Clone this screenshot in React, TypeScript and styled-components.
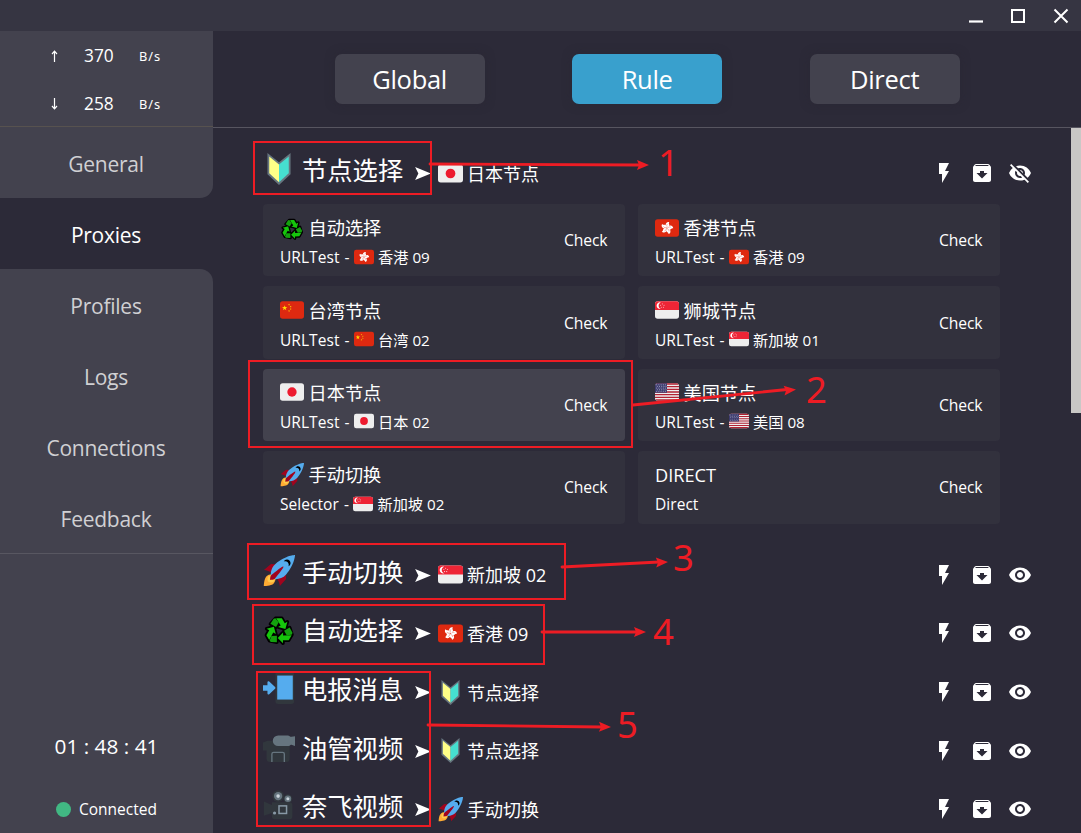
import React from 'react';
import styled, { createGlobalStyle } from 'styled-components';
import { MdFlashOn, MdArchive, MdVisibility, MdVisibilityOff } from 'react-icons/md';

const Global = createGlobalStyle`
  * { box-sizing: border-box; }
  html, body { margin: 0; padding: 0; background: #2c2a38; overflow: hidden; }
  body { font-family: "Open Sans", "Noto Sans CJK SC", sans-serif; color: #fff; }
`;

const Window = styled.div`
  width: 1081px; height: 833px; overflow: hidden; position: relative;
  display: flex; flex-direction: column; background: #2c2a38;
`;
const TitleBar = styled.header`
  flex: none; height: 31px; background: #363542;
  display: flex; justify-content: flex-end; align-items: center; gap: 26.5px; padding-right: 12.5px;
  svg { width: 16px; height: 16px; display: block; }
`;
const Body = styled.div`flex: 1; display: flex; min-height: 0;`;
const Sidebar = styled.aside`
  flex: none; width: 213px; display: flex; flex-direction: column; background: #2c2a38;
`;
const Stats = styled.div`
  height: 96px; background: #43424e; border-bottom: 1px solid #57524f;
`;
const StatRow = styled.div`
  height: 48px; display: grid; grid-template-columns: 34px 55px 30px; padding-left: 50px;
  align-items: center; line-height: 45px;
`;
const Arrow = styled.span`display: flex; svg { width: 10px; height: 14px; margin-top: 2px; }`;
const StatValue = styled.span`font-size: 17.3px;`;
const Unit = styled.span`font-family: "Noto Sans", sans-serif; font-size: 12.8px; letter-spacing: 1px; padding-top: 3px;`;
const MenuItem = styled.div<{ $active?: boolean; $corner?: string }>`
  height: 71px; line-height: 74px; text-align: center; font-size: 21px;
  letter-spacing: -0.25px; padding-right: 1px;
  color: ${p => (p.$active ? '#fff' : '#d0d0d3')};
  background: ${p => (p.$active ? '#2c2a38' : '#43424e')};
  border-radius: ${p => p.$corner || '0'};
`;
const Status = styled.div`
  flex: 1; background: #43424e; border-top: 1px solid #585761; display: flex; flex-direction: column;
  align-items: center; justify-content: flex-end; padding-bottom: 12px;
`;
const Clock = styled.div`font-size: 20.8px; line-height: 28px; margin-bottom: 37px;`;
const Connected = styled.div`
  display: flex; align-items: center; gap: 8px; font-size: 15.5px; line-height: 24px;
  &::before { content: ''; width: 15px; height: 15px; border-radius: 50%; background: #41b883; }
`;
const Main = styled.main`flex: 1; display: flex; flex-direction: column; min-width: 0;`;
const Tabs = styled.nav`
  flex: none; height: 97px; border-bottom: 1px solid #575560; padding: 23px 121.4px 0 121.6px;
  display: flex; justify-content: space-between;
`;
const Tab = styled.button<{ $active?: boolean }>`
  width: 150px; height: 50px; border: 0; border-radius: 7px; padding: 0; color: #fff;
  font: 25.5px/50px "Open Sans", sans-serif; letter-spacing: -0.3px;
  background: ${p => (p.$active ? '#39a0cd' : '#43424e')};
  box-shadow: 0 0 10px rgba(40, 38, 50, 0.5);
`;
const Scroller = styled.div`flex: 1; min-height: 0; display: flex; overflow: hidden;`;
const Content = styled.div`flex: 1; padding: 16px 39px 0 49px;`;
const Thumb = styled.div`width: 10px; height: 285px; background: #c9c8c6;`;
const Group = styled.div`height: 58.6px; display: flex; align-items: center;`;
const GroupIcon = styled.span`display: flex; width: 40px; padding-left: 1px; svg { width: 32px; height: 32px; margin-top: -8px; }`;
const GroupName = styled.span`
  width: 112px; font-size: 25.3px; line-height: 36px; margin-top: -6px; white-space: nowrap;
`;
const Pointer = styled.span`display: flex; width: 24px; padding-left: 1px; svg { width: 16px; height: 13px; margin-top: 1px; }`;
const GroupNow = styled.span`
  flex: 1; display: flex; align-items: center; gap: 4px; font-size: 18px; line-height: 24px; padding-top: 1px;
  svg { width: 25px; height: 25px; margin-top: -1px; }
`;
const Actions = styled.span`display: flex; gap: 14px; svg { width: 24px; height: 24px; display: block; }`;
const Cards = styled.div`
  display: grid; grid-template-columns: 362px 362px; grid-auto-rows: 72.5px; gap: 9.9px 13px;
  padding: 1.3px 0 22px 1px;
`;
const Card = styled.div<{ $active?: boolean }>`
  display: flex; align-items: center; justify-content: space-between; padding: 0 17.5px 0 17px; border-radius: 4px;
  background: ${p => (p.$active ? '#43424e' : '#32313d')};
`;
const CardName = styled.div`
  display: flex; align-items: center; gap: 4.5px; font-size: 18.2px; line-height: 28px; white-space: nowrap; padding-top: 2px;
  svg { width: 24px; height: 24px; margin-top: -1px; }
`;
const CardKind = styled.div`
  display: flex; align-items: center; font-size: 15.2px; line-height: 22px; margin-top: 4px;
  white-space: nowrap;
  svg { width: 20px; height: 20px; margin: -1px 4px 0 4.5px; }
`;
const Kind = styled.span`font-size: 15.5px; letter-spacing: 0.05px; word-spacing: 1px;`;
const Check = styled.span`font-size: 15.7px; letter-spacing: -0.1px;`;
const Overlay = styled.svg`position: absolute; left: 0; top: 0; width: 1081px; height: 833px; pointer-events: none;`;

const flagShape = 'M36 27a4 4 0 0 1-4 4H4a4 4 0 0 1-4-4V9a4 4 0 0 1 4-4h28a4 4 0 0 1 4 4z';
const star = (cx: number, cy: number, r: number, rot = 0) =>
  Array.from({ length: 10 }, (_, i) => {
    const a = (Math.PI * i) / 5 - Math.PI / 2 + rot;
    const q = i % 2 ? r * 0.4 : r;
    return `${cx + q * Math.cos(a)},${cy + q * Math.sin(a)}`;
  }).join(' ');

type Name = 'jp' | 'hk' | 'cn' | 'sg' | 'us' | 'rocket' | 'recycle' | 'beginner' | 'phone' | 'video' | 'movie';

const art: Record<Name, React.ReactNode> = {
  jp: <><path fill="#EEE" d={flagShape} /><circle fill="#ED1B2F" cx="18" cy="18" r="7" /></>,
  cn: <><path fill="#DE2910" d={flagShape} /><g fill="#FFDE02">
    <polygon points={star(7, 15, 4.2)} /><polygon points={star(13.5, 10, 1.5, 0.4)} /><polygon points={star(16, 13, 1.5, 0.8)} />
    <polygon points={star(16, 16.5, 1.5)} /><polygon points={star(13.5, 19.5, 1.5, 0.4)} /></g></>,
  hk: <><path fill="#DE2910" d={flagShape} />{[0, 72, 144, 216, 288].map(a => (
    <g key={a} transform={`rotate(${a + 12} 18 18)`}>
      <path fill="#fff" d="M18 17.5c-3-1.5-4-4.500-2.300-7 1-1.500 2.600-2 4-1.500-.9 1.200-.4 2 .4 3 1.400 2 .5 4.200-2.100 5.500z" />
      <path stroke="#DE2910" strokeWidth=".5" fill="none" d="M18 16.500c-1.300-1.300-1.600-2.700-.7-4.300" />
    </g>))}</>,
  sg: <><path fill="#EEE" d={flagShape} /><path fill="#EE2536" d="M32 5H4a4 4 0 0 0-4 4v9h36V9a4 4 0 0 0-4-4z" />
    <path fill="#fff" d="M5.400 11.500c0-2.300 1.400-4.200 3.400-4.800A5 5 0 1 0 8.800 16.300c-2-.6-3.400-2.500-3.400-4.800z" />
    <g fill="#fff">{[0, 1, 2, 3, 4].map(i => { const a = (i * 72 - 90) * Math.PI / 180; return <polygon key={i} points={star(11 + 2.7 * Math.cos(a), 11.6 + 2.7 * Math.sin(a), 1.1)} />; })}</g></>,
  us: <><path fill="#EEE" d={flagShape} />
    <path fill="#B22334" d="M4 5a4 4 0 0 0-3.500 2h35A4 4 0 0 0 32 5zM0 9h36v2H0zM0 13h36v2H0zM0 17h36v2H0zM0 21h36v2H0zM0 25h36v2H0zM.5 29h35a4 4 0 0 1-3.500 2H4a4 4 0 0 1-3.500-2z" />
    <path fill="#3C3B6E" d="M4 5h14v14H0V9a4 4 0 0 1 4-4z" />
    <g fill="#b9b9d0">{[7, 9.5, 12, 14.5, 17].flatMap((y, r) => [2.5, 5.8, 9.1, 12.4, 15.5].map((x, i) => <circle key={`${r}-${i}`} cx={x + (r % 2 ? 1 : 0)} cy={y} r=".75" />))}</g></>,
  rocket: <>
    <path fill="#A0041E" d="M1 17l8-7 16 1 1 16-7 8s.001-5.999-6-12-12-6-12-6z" />
    <path fill="#FFAC33" d="M.973 35s-.036-7.979 2.985-11S15 21.187 15 21.187 14.999 29 11.999 32c-3 3-11.026 3-11.026 3z" />
    <circle fill="#FFCC4D" cx="8.999" cy="27" r="4" />
    <path fill="#55ACEE" d="M35.999 0s-10 0-22 10c-6 5-6 14-4 16s11 2 16-4c10-12 10-22 10-22z" />
    <path d="M26.999 5c-1.623 0-3.013.971-3.641 2.360.502-.227 1.055-.36 1.641-.36 2.209 0 4 1.791 4 4 0 .586-.133 1.139-.359 1.640 1.389-.627 2.359-2.017 2.359-3.640 0-2.209-1.790-4-4-4z" />
    <path fill="#A0041E" d="M8 28s0-4 1-5 13.001-10.999 14-10-9.001 13-10.001 14S8 28 8 28z" /></>,
  recycle: <g transform="translate(18 20.500)">
    <g stroke="#000" strokeWidth="4" strokeLinejoin="round">{[0, 120, 240].map(a => (
      <path key={a} transform={`rotate(${a})`} d="M-4-14.500H3.200l3.300 5.600 2.900-1.700L7.200-2.500-1-4.700l2.900-1.700-2.200-3.600-3 5.300-6.300-3.600z" />))}</g>
    {[0, 120, 240].map(a => (
      <g key={a} transform={`rotate(${a})`}>
        <path fill="#16c60c" d="M-3.500-14.500H3.200l3.300 5.600 2.900-1.700L7.200-2.500-1-4.700l2.900-1.700-4.900-8z" />
        <path fill="#13a10e" d="M-4-14.500L-.3-10-3.300-4.700-9.600-8.300-6-14z" />
      </g>))}</g>,
  beginner: <><path fill="#66757F" d="M5 0l13 10.500L31 0v24L18 36 5 24z" />
    <path fill="#FFFF87" d="M7 4L18 13v19.800L7 22.700z" /><path fill="#46DFD0" d="M29 4L18 13v19.800l11-10.100z" /></>,
  phone: <><rect x="14" y="0" width="21" height="36" rx="3" fill="#31373D" /><rect x="16" y="4" width="17.500" height="27" fill="#55ACEE" />
    <path fill="#55ACEE" d="M0 15h5v-3.500c0-1.200 1.200-1.500 2-.7l6.300 5.800c.9.800.9 1.800 0 2.600L7 25c-.8.800-2 .5-2-.7V21H0z" /></>,
  video: <><path fill="#31373D" d="M5 11h25v20a4 4 0 0 1-4 4H8a4 4 0 0 1-4-4v-9H0v-9z" />
    <path fill="#66757F" d="M17 5h11c2 0 2 1.500 4 1.500L36 6v11l-4-1.500c-2 0-1 1.500-4 1.500H17a5 5 0 0 1 0-12z" />
    <path fill="none" stroke="#66757F" strokeWidth="1.500" d="M10 35V26a2 2 0 0 1 2-2h10a2 2 0 0 1 2 2v9" /></>,
  movie: <><path fill="#31373D" d="M1 14l9 4v-3h20a3 3 0 0 1 3 3v13a3 3 0 0 1-3 3H13a3 3 0 0 1-3-3v-4l-9 3z" />
    <circle cx="17" cy="8" r="6.500" fill="#31373D" /><circle cx="28" cy="11" r="5" fill="#31373D" />
    <circle cx="17" cy="8" r="4.700" fill="#66757F" /><circle cx="28" cy="11" r="3.700" fill="#66757F" />
    <circle cx="17" cy="8" r="2" fill="#CCD6DD" /><circle cx="28" cy="11" r="1.700" fill="#CCD6DD" />
    <rect x="18" y="19" width="8.500" height="8.500" fill="none" stroke="#8899A6" strokeWidth="1.700" /><circle cx="13" cy="27" r="1.800" fill="#8899A6" /></>,
};
const Emoji = ({ name }: { name: Name }) => <svg viewBox="0 0 36 36">{art[name]}</svg>;

const cards: { icon?: Name; name: string; kind: string; nowIcon?: Name; now?: string; active?: boolean }[] = [
  { icon: 'recycle', name: '自动选择', kind: 'URLTest -', nowIcon: 'hk', now: '香港 09' },
  { icon: 'hk', name: '香港节点', kind: 'URLTest -', nowIcon: 'hk', now: '香港 09' },
  { icon: 'cn', name: '台湾节点', kind: 'URLTest -', nowIcon: 'cn', now: '台湾 02' },
  { icon: 'sg', name: '狮城节点', kind: 'URLTest -', nowIcon: 'sg', now: '新加坡 01' },
  { icon: 'jp', name: '日本节点', kind: 'URLTest -', nowIcon: 'jp', now: '日本 02', active: true },
  { icon: 'us', name: '美国节点', kind: 'URLTest -', nowIcon: 'us', now: '美国 08' },
  { icon: 'rocket', name: '手动切换', kind: 'Selector -', nowIcon: 'sg', now: '新加坡 02' },
  { name: 'DIRECT', kind: 'Direct' },
];

const GroupRow = ({ icon, name, nowIcon, now, open }: { icon: Name; name: string; nowIcon: Name; now: string; open?: boolean }) => (
  <Group>
    <GroupIcon><Emoji name={icon} /></GroupIcon>
    <GroupName>{name}</GroupName>
    <Pointer><svg viewBox="0 0 17 14"><path fill="#fff" d="M0 0l17 7L0 14l3.500-7z" /></svg></Pointer>
    <GroupNow><Emoji name={nowIcon} />{now}</GroupNow>
    <Actions><MdFlashOn /><MdArchive />{open ? <MdVisibilityOff /> : <MdVisibility />}</Actions>
  </Group>
);

const boxes = [
  [254, 142, 177, 52], [249, 361, 383, 86], [248, 544, 317, 55], [253, 605, 291, 59], [257, 672, 173, 154],
];
const arrows = [
  [430, 164, 649, 165], [633, 405, 796, 389.5], [562, 567, 668, 562], [542, 632, 646, 632], [428, 725, 611, 727],
];
const labels: [string, number, number][] = [['1', 658, 176], ['2', 806, 403], ['3', 673, 571], ['4', 653, 645], ['5', 617, 738]];

const Annotations = () => (
  <Overlay viewBox="0 0 1081 833">
    {boxes.map(([x, y, w, h]) => <rect key={y} x={x} y={y} width={w} height={h} fill="none" stroke="#ed1c24" strokeWidth="2" />)}
    {arrows.map(([x1, y1, x2, y2]) => {
      const deg = (Math.atan2(y2 - y1, x2 - x1) * 180) / Math.PI;
      return (
        <g key={y1}>
          <line x1={x1} y1={y1} x2={x2 - 9} y2={y2} stroke="#ed1c24" strokeWidth="2.800" strokeLinecap="round" />
          <path fill="#ed1c24" transform={`translate(${x2} ${y2}) rotate(${deg})`} d="M0 0L-12-5l2 5-2 5z" />
        </g>
      );
    })}
    {labels.map(([t, x, y]) => <text key={t} x={x} y={y} fill="#ed1c24" fontSize="36.500" fontFamily="Noto Sans, sans-serif">{t}</text>)}
  </Overlay>
);

export default function App() {
  return (
    <Window>
      <Global />
      <TitleBar>
        <svg viewBox="0 0 16 16"><path d="M1 13.500h14" stroke="#fff" strokeWidth="2.200" /></svg>
        <svg viewBox="0 0 16 16"><path d="M2 2h12v12H2z" fill="none" stroke="#fff" strokeWidth="2" /></svg>
        <svg viewBox="0 0 16 16"><path d="M1.500 1.500l13 13M14.500 1.500l-13 13" stroke="#fff" strokeWidth="2" /></svg>
      </TitleBar>
      <Body>
        <Sidebar>
          <Stats>
            <StatRow>
              <Arrow><svg viewBox="0 0 10 14"><path d="M4.500 13V2.500M2 5l2.500-2.800L7 5" fill="none" stroke="#fff" strokeWidth="1.200" /></svg></Arrow>
              <StatValue>370</StatValue><Unit>B/s</Unit>
            </StatRow>
            <StatRow>
              <Arrow><svg viewBox="0 0 10 14"><path d="M4.500 1v10.500M2 9l2.500 2.800L7 9" fill="none" stroke="#fff" strokeWidth="1.200" /></svg></Arrow>
              <StatValue>258</StatValue><Unit>B/s</Unit>
            </StatRow>
          </Stats>
          <MenuItem $corner="0 0 13px 0">General</MenuItem>
          <MenuItem $active>Proxies</MenuItem>
          <MenuItem $corner="0 13px 0 0">Profiles</MenuItem>
          <MenuItem>Logs</MenuItem>
          <MenuItem>Connections</MenuItem>
          <MenuItem>Feedback</MenuItem>
          <Status>
            <Clock>01 : 48 : 41</Clock>
            <Connected>Connected</Connected>
          </Status>
        </Sidebar>
        <Main>
          <Tabs><Tab>Global</Tab><Tab $active>Rule</Tab><Tab>Direct</Tab></Tabs>
          <Scroller>
            <Content>
              <GroupRow icon="beginner" name="节点选择" nowIcon="jp" now="日本节点" open />
              <Cards>
                {cards.map(c => (
                  <Card key={c.name} $active={c.active}>
                    <div>
                      <CardName>{c.icon && <Emoji name={c.icon} />}{c.name}</CardName>
                      <CardKind><Kind>{c.kind}</Kind>{c.nowIcon && <Emoji name={c.nowIcon} />}{c.now}</CardKind>
                    </div>
                    <Check>Check</Check>
                  </Card>
                ))}
              </Cards>
              <GroupRow icon="rocket" name="手动切换" nowIcon="sg" now="新加坡 02" />
              <GroupRow icon="recycle" name="自动选择" nowIcon="hk" now="香港 09" />
              <GroupRow icon="phone" name="电报消息" nowIcon="beginner" now="节点选择" />
              <GroupRow icon="video" name="油管视频" nowIcon="beginner" now="节点选择" />
              <GroupRow icon="movie" name="奈飞视频" nowIcon="rocket" now="手动切换" />
            </Content>
            <Thumb />
          </Scroller>
        </Main>
      </Body>
      <Annotations />
    </Window>
  );
}
